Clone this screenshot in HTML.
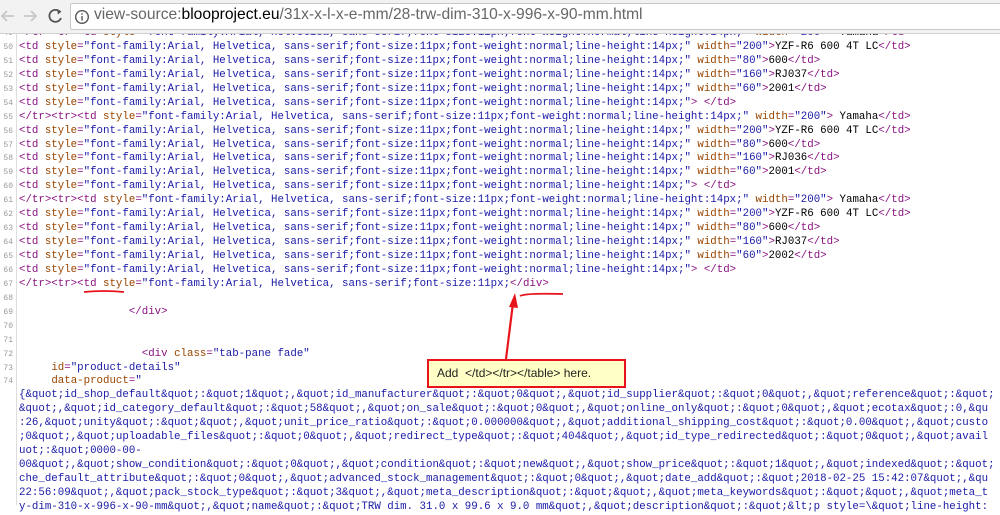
<!DOCTYPE html>
<html><head><meta charset="utf-8"><style>
body{margin:0;width:1000px;height:505px;overflow:hidden;background:#fff;position:relative;font-family:"Liberation Sans",sans-serif}
#bar{position:absolute;left:0;top:0;width:1000px;height:33px;background:#f2f2f2;border-bottom:1px solid #d0d0d0;z-index:5}
#addr{position:absolute;left:70px;top:3px;width:940px;height:25px;background:#fff;border:1px solid #c8c8c8;border-radius:2px}
#url{position:absolute;left:94px;top:6px;font-size:15.6px;color:#666;white-space:nowrap}
#url b{font-weight:normal;color:#000}
#code{position:absolute;left:0;top:27px;width:1000px}
.l{height:13.94px;line-height:13.94px;white-space:pre;font-family:"Liberation Mono",monospace;font-size:10.77px;position:relative;overflow:hidden}
.n{position:absolute;left:0;width:13px;text-align:right;color:#999;font-size:8px}
.t{position:absolute;left:19px;color:#000}
#gut{position:absolute;left:16px;top:33px;width:1px;height:472px;background:#ddd}
.g{color:#881280}.a{color:#994500}.v{color:#1a1aa6}
#box{position:absolute;left:427px;top:359px;width:187px;height:25px;background:#ffffc6;border:2px solid #e8141c;font-size:12px;line-height:25px;padding-left:8px;box-sizing:content-box;white-space:pre;color:#222}
</style></head><body>
<div id="code">
<div class="l"><span class="n">49</span><span class="t"><span class="g">&lt;/tr&gt;&lt;tr&gt;&lt;td </span><span class="a">style</span><span class="g">=</span><span class="v">"font-family:Arial, Helvetica, sans-serif;font-size:11px;font-weight:normal;line-height:14px;"</span> <span class="a">width</span><span class="g">=</span><span class="v">"200"</span><span class="g">&gt;</span> Yamaha<span class="g">&lt;/td&gt;</span></span></div>
<div class="l"><span class="n">50</span><span class="t"><span class="g">&lt;td </span><span class="a">style</span><span class="g">=</span><span class="v">"font-family:Arial, Helvetica, sans-serif;font-size:11px;font-weight:normal;line-height:14px;"</span> <span class="a">width</span><span class="g">=</span><span class="v">"200"</span><span class="g">&gt;</span>YZF-R6 600 4T LC<span class="g">&lt;/td&gt;</span></span></div>
<div class="l"><span class="n">51</span><span class="t"><span class="g">&lt;td </span><span class="a">style</span><span class="g">=</span><span class="v">"font-family:Arial, Helvetica, sans-serif;font-size:11px;font-weight:normal;line-height:14px;"</span> <span class="a">width</span><span class="g">=</span><span class="v">"80"</span><span class="g">&gt;</span>600<span class="g">&lt;/td&gt;</span></span></div>
<div class="l"><span class="n">52</span><span class="t"><span class="g">&lt;td </span><span class="a">style</span><span class="g">=</span><span class="v">"font-family:Arial, Helvetica, sans-serif;font-size:11px;font-weight:normal;line-height:14px;"</span> <span class="a">width</span><span class="g">=</span><span class="v">"160"</span><span class="g">&gt;</span>RJ037<span class="g">&lt;/td&gt;</span></span></div>
<div class="l"><span class="n">53</span><span class="t"><span class="g">&lt;td </span><span class="a">style</span><span class="g">=</span><span class="v">"font-family:Arial, Helvetica, sans-serif;font-size:11px;font-weight:normal;line-height:14px;"</span> <span class="a">width</span><span class="g">=</span><span class="v">"60"</span><span class="g">&gt;</span>2001<span class="g">&lt;/td&gt;</span></span></div>
<div class="l"><span class="n">54</span><span class="t"><span class="g">&lt;td </span><span class="a">style</span><span class="g">=</span><span class="v">"font-family:Arial, Helvetica, sans-serif;font-size:11px;font-weight:normal;line-height:14px;"</span><span class="g">&gt;</span> <span class="g">&lt;/td&gt;</span></span></div>
<div class="l"><span class="n">55</span><span class="t"><span class="g">&lt;/tr&gt;&lt;tr&gt;&lt;td </span><span class="a">style</span><span class="g">=</span><span class="v">"font-family:Arial, Helvetica, sans-serif;font-size:11px;font-weight:normal;line-height:14px;"</span> <span class="a">width</span><span class="g">=</span><span class="v">"200"</span><span class="g">&gt;</span> Yamaha<span class="g">&lt;/td&gt;</span></span></div>
<div class="l"><span class="n">56</span><span class="t"><span class="g">&lt;td </span><span class="a">style</span><span class="g">=</span><span class="v">"font-family:Arial, Helvetica, sans-serif;font-size:11px;font-weight:normal;line-height:14px;"</span> <span class="a">width</span><span class="g">=</span><span class="v">"200"</span><span class="g">&gt;</span>YZF-R6 600 4T LC<span class="g">&lt;/td&gt;</span></span></div>
<div class="l"><span class="n">57</span><span class="t"><span class="g">&lt;td </span><span class="a">style</span><span class="g">=</span><span class="v">"font-family:Arial, Helvetica, sans-serif;font-size:11px;font-weight:normal;line-height:14px;"</span> <span class="a">width</span><span class="g">=</span><span class="v">"80"</span><span class="g">&gt;</span>600<span class="g">&lt;/td&gt;</span></span></div>
<div class="l"><span class="n">58</span><span class="t"><span class="g">&lt;td </span><span class="a">style</span><span class="g">=</span><span class="v">"font-family:Arial, Helvetica, sans-serif;font-size:11px;font-weight:normal;line-height:14px;"</span> <span class="a">width</span><span class="g">=</span><span class="v">"160"</span><span class="g">&gt;</span>RJ036<span class="g">&lt;/td&gt;</span></span></div>
<div class="l"><span class="n">59</span><span class="t"><span class="g">&lt;td </span><span class="a">style</span><span class="g">=</span><span class="v">"font-family:Arial, Helvetica, sans-serif;font-size:11px;font-weight:normal;line-height:14px;"</span> <span class="a">width</span><span class="g">=</span><span class="v">"60"</span><span class="g">&gt;</span>2001<span class="g">&lt;/td&gt;</span></span></div>
<div class="l"><span class="n">60</span><span class="t"><span class="g">&lt;td </span><span class="a">style</span><span class="g">=</span><span class="v">"font-family:Arial, Helvetica, sans-serif;font-size:11px;font-weight:normal;line-height:14px;"</span><span class="g">&gt;</span> <span class="g">&lt;/td&gt;</span></span></div>
<div class="l"><span class="n">61</span><span class="t"><span class="g">&lt;/tr&gt;&lt;tr&gt;&lt;td </span><span class="a">style</span><span class="g">=</span><span class="v">"font-family:Arial, Helvetica, sans-serif;font-size:11px;font-weight:normal;line-height:14px;"</span> <span class="a">width</span><span class="g">=</span><span class="v">"200"</span><span class="g">&gt;</span> Yamaha<span class="g">&lt;/td&gt;</span></span></div>
<div class="l"><span class="n">62</span><span class="t"><span class="g">&lt;td </span><span class="a">style</span><span class="g">=</span><span class="v">"font-family:Arial, Helvetica, sans-serif;font-size:11px;font-weight:normal;line-height:14px;"</span> <span class="a">width</span><span class="g">=</span><span class="v">"200"</span><span class="g">&gt;</span>YZF-R6 600 4T LC<span class="g">&lt;/td&gt;</span></span></div>
<div class="l"><span class="n">63</span><span class="t"><span class="g">&lt;td </span><span class="a">style</span><span class="g">=</span><span class="v">"font-family:Arial, Helvetica, sans-serif;font-size:11px;font-weight:normal;line-height:14px;"</span> <span class="a">width</span><span class="g">=</span><span class="v">"80"</span><span class="g">&gt;</span>600<span class="g">&lt;/td&gt;</span></span></div>
<div class="l"><span class="n">64</span><span class="t"><span class="g">&lt;td </span><span class="a">style</span><span class="g">=</span><span class="v">"font-family:Arial, Helvetica, sans-serif;font-size:11px;font-weight:normal;line-height:14px;"</span> <span class="a">width</span><span class="g">=</span><span class="v">"160"</span><span class="g">&gt;</span>RJ037<span class="g">&lt;/td&gt;</span></span></div>
<div class="l"><span class="n">65</span><span class="t"><span class="g">&lt;td </span><span class="a">style</span><span class="g">=</span><span class="v">"font-family:Arial, Helvetica, sans-serif;font-size:11px;font-weight:normal;line-height:14px;"</span> <span class="a">width</span><span class="g">=</span><span class="v">"60"</span><span class="g">&gt;</span>2002<span class="g">&lt;/td&gt;</span></span></div>
<div class="l"><span class="n">66</span><span class="t"><span class="g">&lt;td </span><span class="a">style</span><span class="g">=</span><span class="v">"font-family:Arial, Helvetica, sans-serif;font-size:11px;font-weight:normal;line-height:14px;"</span><span class="g">&gt;</span> <span class="g">&lt;/td&gt;</span></span></div>
<div class="l"><span class="n">67</span><span class="t"><span class="g">&lt;/tr&gt;&lt;tr&gt;&lt;td </span><span class="a">style</span><span class="g">=</span><span class="v">"font-family:Arial, Helvetica, sans-serif;font-size:11px;<span class="g">&lt;/div&gt;</span></span></span></div>
<div class="l"><span class="n">68</span></div>
<div class="l"><span class="n">69</span><span class="t">                 <span class="g">&lt;/div&gt;</span></span></div>
<div class="l"><span class="n">70</span></div>
<div class="l"><span class="n">71</span></div>
<div class="l"><span class="n">72</span><span class="t">                   <span class="g">&lt;div </span><span class="a">class</span><span class="g">=</span><span class="v">"tab-pane fade"</span></span></div>
<div class="l"><span class="n">73</span><span class="t">     <span class="a">id</span><span class="g">=</span><span class="v">"product-details"</span></span></div>
<div class="l"><span class="n">74</span><span class="t">     <span class="a">data-product</span><span class="g">=</span><span class="v">"</span></span></div>
<div class="l"><span class="t v">{&amp;quot;id_shop_default&amp;quot;:&amp;quot;1&amp;quot;,&amp;quot;id_manufacturer&amp;quot;:&amp;quot;0&amp;quot;,&amp;quot;id_supplier&amp;quot;:&amp;quot;0&amp;quot;,&amp;quot;reference&amp;quot;:&amp;quot;</span></div>
<div class="l"><span class="t v">&amp;quot;,&amp;quot;id_category_default&amp;quot;:&amp;quot;58&amp;quot;,&amp;quot;on_sale&amp;quot;:&amp;quot;0&amp;quot;,&amp;quot;online_only&amp;quot;:&amp;quot;0&amp;quot;,&amp;quot;ecotax&amp;quot;:0,&amp;qu</span></div>
<div class="l"><span class="t v">:26,&amp;quot;unity&amp;quot;:&amp;quot;&amp;quot;,&amp;quot;unit_price_ratio&amp;quot;:&amp;quot;0.000000&amp;quot;,&amp;quot;additional_shipping_cost&amp;quot;:&amp;quot;0.00&amp;quot;,&amp;quot;custo</span></div>
<div class="l"><span class="t v">;0&amp;quot;,&amp;quot;uploadable_files&amp;quot;:&amp;quot;0&amp;quot;,&amp;quot;redirect_type&amp;quot;:&amp;quot;404&amp;quot;,&amp;quot;id_type_redirected&amp;quot;:&amp;quot;0&amp;quot;,&amp;quot;avail</span></div>
<div class="l"><span class="t v">uot;:&amp;quot;0000-00-</span></div>
<div class="l"><span class="t v">00&amp;quot;,&amp;quot;show_condition&amp;quot;:&amp;quot;0&amp;quot;,&amp;quot;condition&amp;quot;:&amp;quot;new&amp;quot;,&amp;quot;show_price&amp;quot;:&amp;quot;1&amp;quot;,&amp;quot;indexed&amp;quot;:&amp;quot;</span></div>
<div class="l"><span class="t v">che_default_attribute&amp;quot;:&amp;quot;0&amp;quot;,&amp;quot;advanced_stock_management&amp;quot;:&amp;quot;0&amp;quot;,&amp;quot;date_add&amp;quot;:&amp;quot;2018-02-25 15:42:07&amp;quot;,&amp;qu</span></div>
<div class="l"><span class="t v">22:56:09&amp;quot;,&amp;quot;pack_stock_type&amp;quot;:&amp;quot;3&amp;quot;,&amp;quot;meta_description&amp;quot;:&amp;quot;&amp;quot;,&amp;quot;meta_keywords&amp;quot;:&amp;quot;&amp;quot;,&amp;quot;meta_t</span></div>
<div class="l"><span class="t v">y-dim-310-x-996-x-90-mm&amp;quot;,&amp;quot;name&amp;quot;:&amp;quot;TRW dim. 31.0 x 99.6 x 9.0 mm&amp;quot;,&amp;quot;description&amp;quot;:&amp;quot;&amp;lt;p style=\&amp;quot;line-height:</span></div>
</div>
<div id="gut"></div>
<div id="bar">
<svg width="70" height="33" style="position:absolute;left:0;top:0">
<path d="M14 16H2M7 11L2 16L7 21" stroke="#c8c8c8" stroke-width="1.8" fill="none"/>
<path d="M24 16H36M31 11L36 16L31 21" stroke="#c8c8c8" stroke-width="1.8" fill="none"/>
<path d="M60 12A6 6 0 1 0 61 18" stroke="#555" stroke-width="1.8" fill="none"/><path d="M57 9L61.5 11.5L58 14.5Z" fill="#555"/>
</svg>
<div id="addr"></div>
<svg width="16" height="16" style="position:absolute;left:74px;top:9px"><circle cx="8" cy="8" r="6.3" stroke="#555" stroke-width="1.4" fill="none"/><rect x="7.3" y="7" width="1.4" height="4.5" fill="#555"/><rect x="7.3" y="4.3" width="1.4" height="1.5" fill="#555"/></svg>
<div id="url">view-source:<b>blooproject.eu</b>/31x-x-l-x-e-mm/28-trw-dim-310-x-996-x-90-mm.html</div>
</div>
<svg width="1000" height="505" style="position:absolute;left:0;top:0;z-index:6;pointer-events:none">
<path d="M84 292Q104 290 124 292" stroke="#e8141c" stroke-width="1.8" fill="none"/>
<path d="M520 296Q525 293 563 294" stroke="#e8141c" stroke-width="1.8" fill="none"/>
<path d="M506 359L513 303" stroke="#e8141c" stroke-width="2.2" fill="none"/>
<path d="M515 293L509 307L518 308Z" fill="#e8141c"/>
</svg>
<div id="box">Add  &lt;/td&gt;&lt;/tr&gt;&lt;/table&gt; here.</div>
</body></html>
